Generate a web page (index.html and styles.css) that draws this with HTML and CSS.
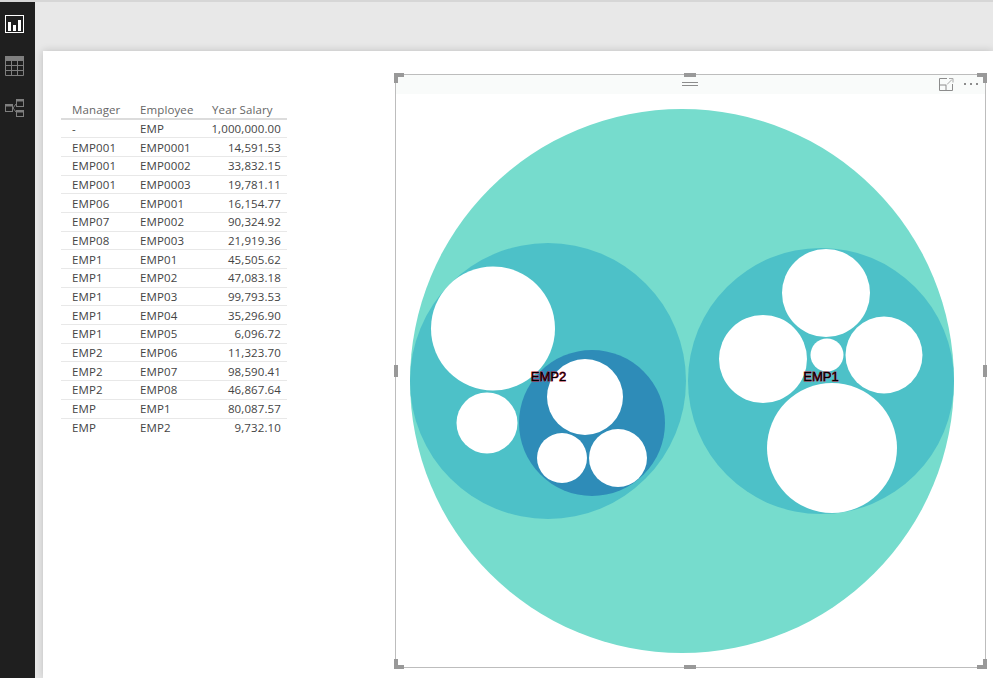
FILE: index.html
```html
<!DOCTYPE html>
<html lang="en">
<head>
    <meta charset="UTF-8">
    <meta name="viewport" content="width=device-width, initial-scale=1.0">
    <title>Report</title>
    <link rel="stylesheet" href="styles.css">
</head>
<body>
    <div class="app">
        <nav class="sidebar">
            <svg class="nav-icon" width="20" height="19" viewBox="0 0 20 19">
                <rect x="0.5" y="0.5" width="18" height="17" fill="none" stroke="#fff"/>
                <rect x="3" y="7" width="3" height="9" fill="#fff"/>
                <rect x="8" y="10" width="3" height="6" fill="#fff"/>
                <rect x="13" y="5" width="3" height="11" fill="#fff"/>
            </svg>
            <svg class="nav-icon" width="20" height="21" viewBox="0 0 20 21">
                <rect x="0" y="0" width="19" height="5" fill="#7f7f7f"/>
                <path d="M.5 4v15.500h18V4M.5 9.500h18M.5 14.500h18M6.500 4v15.500M12.500 4v15.500" fill="none" stroke="#7f7f7f"/>
            </svg>
            <svg class="nav-icon" width="20" height="18" viewBox="0 0 20 18">
                <rect x="0" y="5" width="7" height="2.500" fill="#7f7f7f"/>
                <rect x="0.5" y="5.500" width="7" height="7" fill="none" stroke="#7f7f7f"/>
                <rect x="11" y="0" width="8" height="2.500" fill="#7f7f7f"/>
                <rect x="11.500" y="0.500" width="7" height="7" fill="none" stroke="#7f7f7f"/>
                <rect x="11" y="11" width="8" height="2.500" fill="#7f7f7f"/>
                <rect x="11.500" y="11.500" width="7" height="6" fill="none" stroke="#7f7f7f"/>
                <path d="M8 9l3-4M8 9l3 4" fill="none" stroke="#7f7f7f"/>
            </svg>
        </nav>
        <main class="canvas">
            <div class="page">
                <table class="salary-table">
                    <thead>
                        <tr><th>Manager</th><th>Employee</th><th class="num">Year Salary</th></tr>
                    </thead>
                    <tbody>
                        <tr><td>-</td><td>EMP</td><td class="num">1,000,000.00</td></tr>
                        <tr><td>EMP001</td><td>EMP0001</td><td class="num">14,591.53</td></tr>
                        <tr><td>EMP001</td><td>EMP0002</td><td class="num">33,832.15</td></tr>
                        <tr><td>EMP001</td><td>EMP0003</td><td class="num">19,781.11</td></tr>
                        <tr><td>EMP06</td><td>EMP001</td><td class="num">16,154.77</td></tr>
                        <tr><td>EMP07</td><td>EMP002</td><td class="num">90,324.92</td></tr>
                        <tr><td>EMP08</td><td>EMP003</td><td class="num">21,919.36</td></tr>
                        <tr><td>EMP1</td><td>EMP01</td><td class="num">45,505.62</td></tr>
                        <tr><td>EMP1</td><td>EMP02</td><td class="num">47,083.18</td></tr>
                        <tr><td>EMP1</td><td>EMP03</td><td class="num">99,793.53</td></tr>
                        <tr><td>EMP1</td><td>EMP04</td><td class="num">35,296.90</td></tr>
                        <tr><td>EMP1</td><td>EMP05</td><td class="num">6,096.72</td></tr>
                        <tr><td>EMP2</td><td>EMP06</td><td class="num">11,323.70</td></tr>
                        <tr><td>EMP2</td><td>EMP07</td><td class="num">98,590.41</td></tr>
                        <tr><td>EMP2</td><td>EMP08</td><td class="num">46,867.64</td></tr>
                        <tr><td>EMP</td><td>EMP1</td><td class="num">80,087.57</td></tr>
                        <tr><td>EMP</td><td>EMP2</td><td class="num">9,732.10</td></tr>
                    </tbody>
                </table>

                <section class="visual">
                    <div class="visual-header">
                        <span class="grip"></span>
                        <svg class="focus-icon" width="15" height="13" viewBox="0 0 15 13">
                            <path d="M8 .5H.5v12h13V6M.5 7h6.500v5.500" fill="none" stroke="#8c8c8c"/>
                            <path d="M8 6.500l5-5M10 .5h4v4" fill="none" stroke="#a8a8a8"/>
                        </svg>
                        <svg class="more-icon" width="15" height="3" viewBox="0 0 15 3">
                            <rect x="0" y="0" width="2" height="2" fill="#8c8c8c"/>
                            <rect x="6" y="0" width="2" height="2" fill="#8c8c8c"/>
                            <rect x="12" y="0" width="2" height="2" fill="#8c8c8c"/>
                        </svg>
                    </div>
                    <svg class="pack" width="589" height="573" viewBox="396 94 589 573">
                        <circle cx="682" cy="381" r="272" fill="#76dccd"/>
                        <circle cx="548" cy="381" r="138" fill="#4dc1c8"/>
                        <circle cx="821" cy="381" r="133" fill="#4dc1c8"/>
                        <circle cx="493" cy="328.500" r="62" fill="#fff"/>
                        <circle cx="487" cy="423" r="30.500" fill="#fff"/>
                        <circle cx="592" cy="423" r="73" fill="#2e8cb8"/>
                        <circle cx="585" cy="397" r="38" fill="#fff"/>
                        <circle cx="562" cy="458" r="25" fill="#fff"/>
                        <circle cx="618" cy="458" r="29" fill="#fff"/>
                        <circle cx="826" cy="293" r="44" fill="#fff"/>
                        <circle cx="763" cy="359" r="44" fill="#fff"/>
                        <circle cx="884" cy="355" r="38.500" fill="#fff"/>
                        <circle cx="827" cy="355" r="16.500" fill="#fff"/>
                        <circle cx="832" cy="448" r="65" fill="#fff"/>
                        <text class="pack-label" x="548.500" y="381" text-anchor="middle">EMP2</text>
                        <text class="pack-label" x="821" y="381" text-anchor="middle">EMP1</text>
                    </svg>
                    <span class="handle corner top-left"></span>
                    <span class="handle corner top-right"></span>
                    <span class="handle corner bottom-left"></span>
                    <span class="handle corner bottom-right"></span>
                    <span class="handle edge top"></span>
                    <span class="handle edge bottom"></span>
                    <span class="handle edge left"></span>
                    <span class="handle edge right"></span>
                </section>
            </div>
        </main>
    </div>
</body>
</html>
```

FILE: styles.css
```css
html, body {
    margin: 0;
    height: 100%;
    overflow: hidden;
}
body {
    font-family: "Open Sans", "Noto Sans", Arial, sans-serif;
    background-color: #e8e8e8;
    color: #555;
}
.app {
    display: flex;
    height: 678px;
    border-top: 2px solid #d6d6d6;
    box-sizing: border-box;
}
.sidebar {
    width: 35px;
    flex-shrink: 0;
    background-color: #1f1f1f;
    display: flex;
    flex-direction: column;
    padding: 13px 0 0 5px;
    box-sizing: border-box;
    gap: 22px;
}
.nav-icon {
    display: block;
}
.canvas {
    flex: 1;
    padding: 49px 0 0 8px;
    min-width: 0;
}
.page {
    display: flex;
    align-items: flex-start;
    height: 627px;
    box-sizing: border-box;
    background-color: #fff;
    box-shadow: 0 0 8px rgba(0, 0, 0, 0.18);
    padding: 23px 0 0 18px;
}
.salary-table {
    width: 226px;
    margin-top: 27px;
    border-collapse: collapse;
    font-size: 11.5px;
    letter-spacing: 0.12px;
    table-layout: fixed;
    flex-shrink: 0;
}
.salary-table th {
    box-sizing: border-box;
    font-weight: 400;
    text-align: left;
    color: #666;
    height: 18px;
    padding: 0 6px 0 11px;
    border-bottom: 2px solid #dcdcdc;
    white-space: nowrap;
}
.salary-table th:nth-child(1) { width: 68px; }
.salary-table th:nth-child(2) { width: 72px; }
.salary-table th.num {
    text-align: left;
    padding-left: 11px;
    padding-right: 0;
}
.salary-table tbody tr {
    height: 18.7px;
}
.salary-table td {
    padding: 0 6px 0 11px;
    line-height: 15px;
    border-bottom: 1px solid #e8e8e8;
    color: #444;
    white-space: nowrap;
}
.salary-table tbody tr:last-child td {
    border-bottom: none;
}
.salary-table td.num {
    text-align: right;
    padding-left: 0;
}
.visual {
    position: relative;
    width: 589px;
    height: 592px;
    margin-left: 108px;
    border: 1px solid #bdbdbd;
    flex-shrink: 0;
}
.visual-header {
    display: flex;
    align-items: center;
    justify-content: flex-end;
    gap: 10px;
    height: 19px;
    padding-right: 6px;
    background-color: #f9fbfa;
}
.grip {
    position: absolute;
    left: 286px;
    top: 7px;
    width: 16px;
    height: 2px;
    border-top: 1px solid #8c8c8c;
    border-bottom: 1px solid #8c8c8c;
}
.pack {
    display: block;
}
.pack-label {
    font-family: "Liberation Sans", Arial, sans-serif;
    font-size: 13px;
    fill: #000;
    stroke: #b01030;
    stroke-width: 0.8px;
    paint-order: stroke;
}
.handle {
    position: absolute;
    background-color: #999;
}
.edge.top, .edge.bottom {
    width: 12px;
    height: 4px;
    left: 288px;
}
.edge.top { top: -2px; }
.edge.bottom { bottom: -2px; }
.edge.left, .edge.right {
    width: 4px;
    height: 12px;
    top: 290px;
}
.edge.left { left: -2px; }
.edge.right { right: -2px; }
.corner {
    width: 6px;
    height: 6px;
    background: none;
    border: 0 solid #999;
}
.top-left { top: -2px; left: -2px; border-width: 4px 0 0 4px; }
.top-right { top: -2px; right: -2px; border-width: 4px 4px 0 0; }
.bottom-left { bottom: -2px; left: -2px; border-width: 0 0 4px 4px; }
.bottom-right { bottom: -2px; right: -2px; border-width: 0 4px 4px 0; }
```
